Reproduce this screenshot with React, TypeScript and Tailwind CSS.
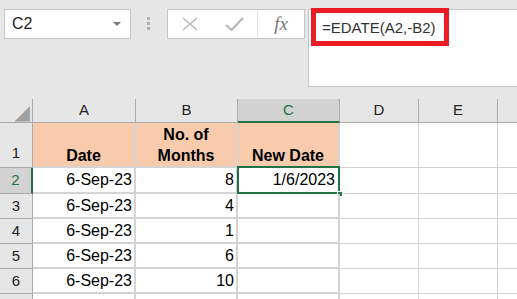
const sans = { fontFamily: '"Liberation Sans", Arial, sans-serif' };

const rows = [
    { n: 2, a: '6-Sep-23', b: '8', c: '1/6/2023' },
    { n: 3, a: '6-Sep-23', b: '4', c: '' },
    { n: 4, a: '6-Sep-23', b: '1', c: '' },
    { n: 5, a: '6-Sep-23', b: '6', c: '' },
    { n: 6, a: '6-Sep-23', b: '10', c: '' },
];

function ColHead({ label, active }: { label: string; active?: boolean }) {
    return (
        <div
            className={`flex items-center justify-center text-[15px] border-r border-[#ababab] ${
                active ? 'bg-[#d2d2d2] text-[#217346] border-b-2 border-b-[#217346]' : 'bg-[#e6e6e6] text-[#222] border-b border-b-[#ababab]'
            }`}
        >
            {label}
        </div>
    );
}

export default function App() {
    return (
        <div className="w-[517px] h-[299px] overflow-hidden bg-[#e6e6e6] flex flex-col" style={sans}>
            {/* formula bar strip */}
            <div className="h-[99px] shrink-0 flex items-start pt-[9px] pl-[4px]">
                <div className="w-[127px] h-[30px] bg-white border border-[#c6c6c6] flex items-center justify-between pl-[7px] pr-[9px]">
                    <span className="text-[16px] text-[#222]">C2</span>
                    <span className="w-0 h-0 border-l-[4px] border-r-[4px] border-t-[4px] border-l-transparent border-r-transparent border-t-[#777]" />
                </div>
                <div className="ml-[16px] mt-[8px] flex flex-col gap-[2px]">
                    <span className="w-[3px] h-[3px] bg-[#b0b0b0]" />
                    <span className="w-[3px] h-[3px] bg-[#b0b0b0]" />
                    <span className="w-[3px] h-[3px] bg-[#b0b0b0]" />
                </div>
                <div className="ml-[17px] w-[138px] h-[30px] bg-white border border-[#c6c6c6] flex">
                    <div className="w-[44px] flex items-center justify-center">
                        <svg width="16" height="14" viewBox="0 0 16 14">
                            <path d="M1 1 L15 13 M15 1 L1 13" stroke="#b4b4b4" strokeWidth="1.4" fill="none" />
                        </svg>
                    </div>
                    <div className="w-[45px] flex items-center justify-center">
                        <svg width="19" height="14" viewBox="0 0 19 14">
                            <path d="M1 8 L6.5 13 L18 1" stroke="#b4b4b4" strokeWidth="2" fill="none" />
                        </svg>
                    </div>
                    <div className="flex-1 border-l border-[#e0e0e0] flex items-center justify-center">
                        <span className="italic text-[19px] text-[#777]" style={{ fontFamily: '"Liberation Serif", serif' }}>
                            fx
                        </span>
                    </div>
                </div>
                <div className="relative ml-[3px] flex-1 h-[78px] bg-white border border-r-0 border-[#c6c6c6]">
                    <span className="absolute left-[13px] top-[7px] text-[15px] text-[#333]">=EDATE(A2,-B2)</span>
                    <div className="absolute left-[2px] top-[-2px] w-[138px] h-[38px] border-[5px] border-[#ec1c24]" />
                </div>
            </div>

            {/* sheet */}
            <div className="grid grid-cols-[33px_103px_102px_102px_79px_79px_1fr] grid-rows-[24px_45px_26px_25px_25px_25px_25px_1fr] flex-1 bg-white">
                <div className="bg-[#e6e6e6] border-r border-b border-[#ababab] flex items-end justify-end pr-[2px] overflow-hidden">
                    <span className="text-[20px] leading-[20px] text-[#a0a0a0]" style={{ fontFamily: '"DejaVu Sans", sans-serif' }}>
                        ◢
                    </span>
                </div>
                <ColHead label="A" />
                <ColHead label="B" />
                <ColHead label="C" active />
                <ColHead label="D" />
                <ColHead label="E" />
                <div className="bg-[#e6e6e6] border-b border-[#ababab]" />

                {/* row 1 */}
                <div className="bg-[#e6e6e6] border-r border-b border-[#ababab] flex items-end justify-center pb-[3px] text-[15px] text-[#222]">1</div>
                <div className="bg-[#f8cbad] border-r-2 border-b-2 border-[#d4d4d4] flex items-end justify-center font-bold text-[16px] leading-[21px] text-black">Date</div>
                <div className="bg-[#f8cbad] border-r-2 border-b-2 border-[#d4d4d4] flex items-end justify-center text-center font-bold text-[16px] leading-[21px] text-black">
                    No. of
                    <br />
                    Months
                </div>
                <div className="bg-[#f8cbad] border-r-2 border-b-2 border-[#d4d4d4] flex items-end justify-center font-bold text-[16px] leading-[21px] text-black">New Date</div>
                <div className="border-r border-b border-[#d4d4d4]" />
                <div className="border-r border-b border-[#d4d4d4]" />
                <div className="border-b border-[#d4d4d4]" />

                {rows.map((r) => (
                    <div key={r.n} className="contents">
                        <div
                            className={`border-b border-[#ababab] flex items-center justify-center text-[15px] ${
                                r.n === 2 ? 'bg-[#d2d2d2] text-[#217346] border-r-2 border-r-[#217346]' : 'bg-[#e6e6e6] text-[#222] border-r border-r-[#ababab]'
                            }`}
                        >
                            {r.n}
                        </div>
                        <div className="border-r-2 border-b-2 border-[#d4d4d4] flex items-center justify-end pr-[2px] text-[16px] text-black">{r.a}</div>
                        <div className="border-r-2 border-b-2 border-[#d4d4d4] flex items-center justify-end pr-[2px] text-[16px] text-black">{r.b}</div>
                        <div className="relative border-r-2 border-b-2 border-[#d4d4d4] flex items-center justify-end pr-[3px] text-[16px] text-black">
                            {r.c}
                            {r.n === 2 && (
                                <>
                                    <div className="absolute left-[-1px] top-[-2px] right-[-2px] bottom-[-2px] border-2 border-[#217346]" />
                                    <div className="absolute right-[-5px] bottom-[-5px] w-[6px] h-[6px] bg-[#217346] border border-white" />
                                </>
                            )}
                        </div>
                        <div className="border-r border-b border-[#d4d4d4]" />
                        <div className="border-r border-b border-[#d4d4d4]" />
                        <div className="border-b border-[#d4d4d4]" />
                    </div>
                ))}

                <div className="bg-[#e6e6e6] border-r border-[#ababab]" />
                <div className="border-r-2 border-[#d4d4d4]" />
                <div className="border-r-2 border-[#d4d4d4]" />
                <div className="border-r-2 border-[#d4d4d4]" />
                <div className="border-r border-[#d4d4d4]" />
                <div className="border-r border-[#d4d4d4]" />
                <div />
            </div>
        </div>
    );
}
